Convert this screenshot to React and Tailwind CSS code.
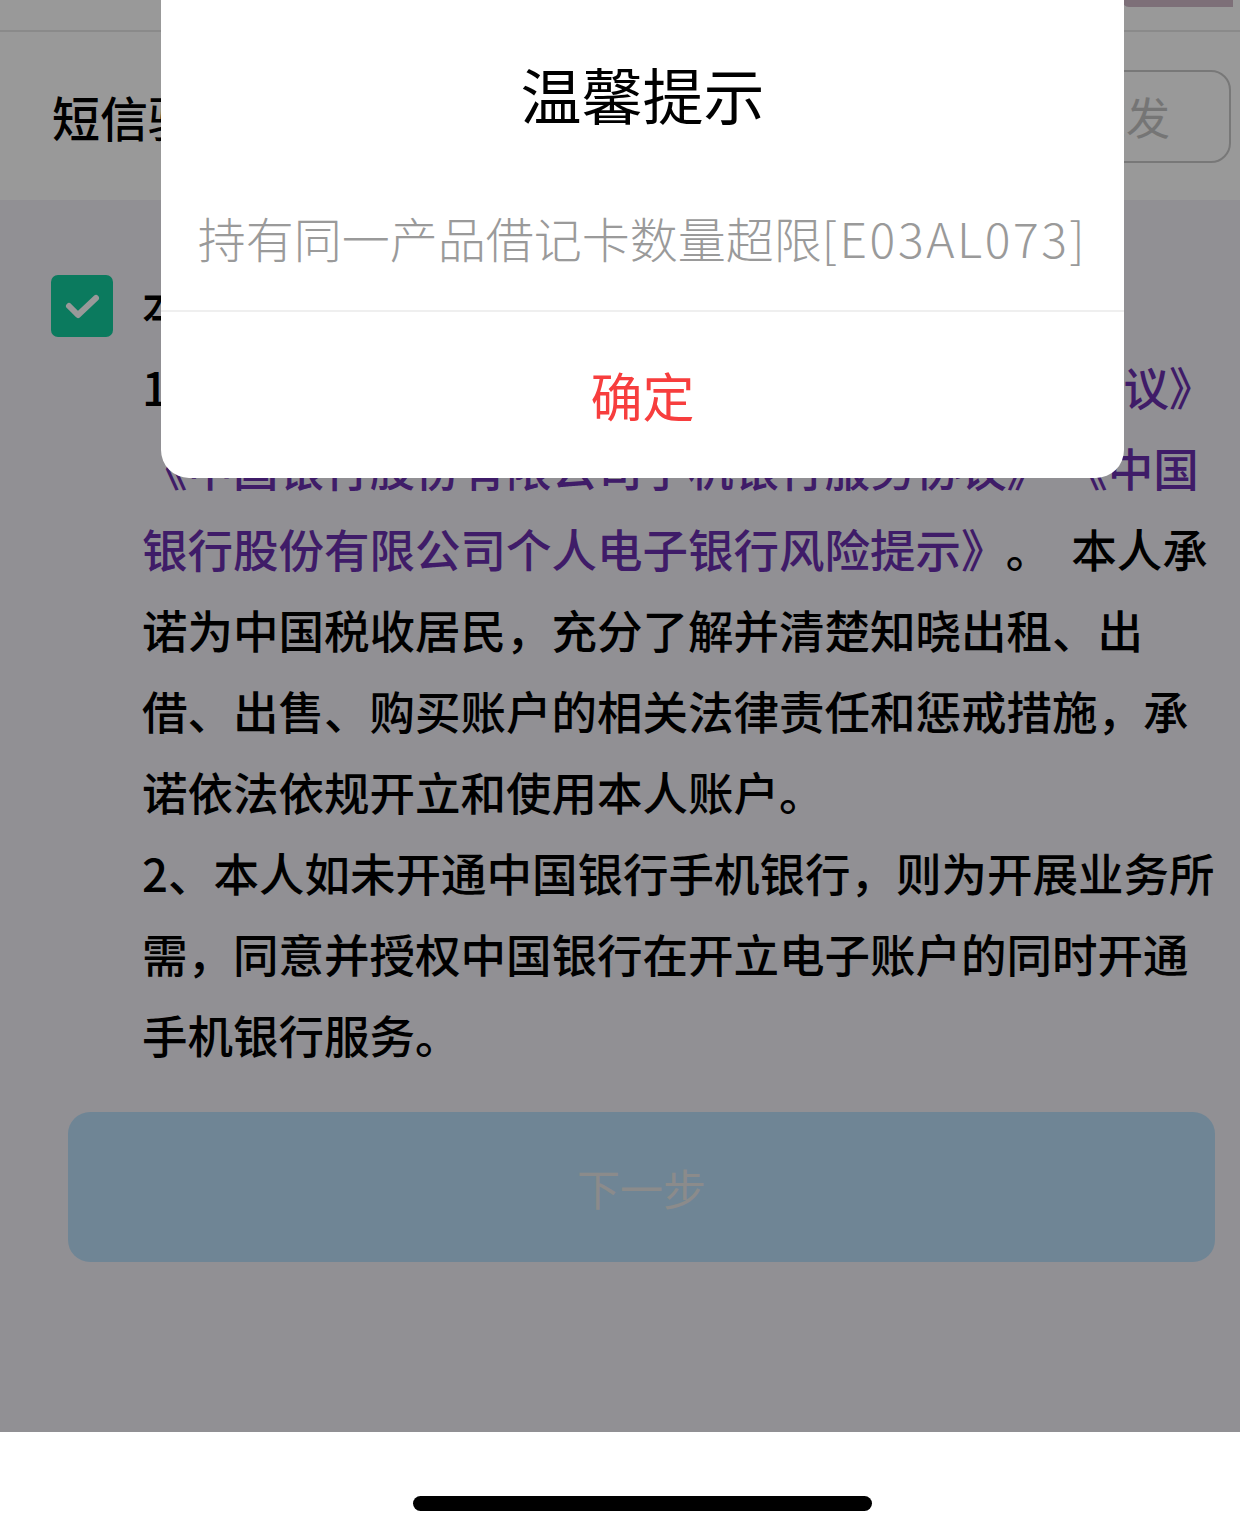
import React from 'react';

const font = { fontFamily: '"Noto Sans CJK SC", "Noto Sans", sans-serif' };

// agreement text, one entry per rendered line
const lines = [
  [{ t: '本人已阅读并同意以下内容：' }],
  [{ t: '1、本人已阅读并同意' }, { t: '《中国银行电子账户服务协议》', link: true }],
  [{ t: '《中国银行股份有限公司手机银行服务协议》 《中国', link: true }],
  [
    { t: '银行股份有限公司个人电子银行风险提示》', link: true },
    { t: '。', cls: 'ml-[22px]' },
    { t: '本人承', cls: 'ml-[20px]' },
  ],
  [{ t: '诺为中国税收居民，充分了解并清楚知晓出租、出' }],
  [{ t: '借、出售、购买账户的相关法律责任和惩戒措施，承' }],
  [{ t: '诺依法依规开立和使用本人账户。' }],
  [{ t: '2、本人如未开通中国银行手机银行，则为开展业务所' }],
  [{ t: '需，同意并授权中国银行在开立电子账户的同时开通' }],
  [{ t: '手机银行服务。' }],
];

const CheckBox = () => (
  <div className="w-[62px] h-[62px] rounded-[7px] bg-[#13cb9d] flex items-center justify-center shrink-0">
    <svg width="40" height="40" viewBox="0 0 40 40" fill="none">
      <polyline points="7,20 16,29 34,12" stroke="#ffffff" strokeWidth="6" strokeLinecap="round" strokeLinejoin="round" />
    </svg>
  </div>
);

const AlertDialog = () => (
  <div className="absolute left-[161px] top-0 w-[963px] bg-white rounded-b-[28px] flex flex-col" style={font}>
    <div className="pt-[58px] text-center text-[61px] leading-[72px] text-black">温馨提示</div>
    <div className="mt-[76px] pb-[42px] text-center text-[48px] leading-[62px] text-[#9a9a9a] font-light whitespace-nowrap">
      持有同一产品借记卡数量超限<span className="tracking-[2.6px]">[E03AL073]</span>
    </div>
    <div className="h-[2px] bg-[#efefef]"></div>
    <div className="h-[166px] flex items-center justify-center text-[52px] text-[#f73e3e]">确定</div>
  </div>
);

export default function App() {
  return (
    <div className="w-[1240px] h-[1535px] flex flex-col bg-white" style={font}>
      <div className="relative h-[1432px] bg-[#f2f0f7] flex flex-col">
        {/* top strip */}
        <div className="h-[32px] bg-white border-b-2 border-[#e6e6e6] flex justify-end">
          <div className="w-[111px] h-[7px] mr-[7px] bg-[#d0b9c8] rounded-bl-[8px]"></div>
        </div>

        {/* sms code row */}
        <div className="h-[168px] bg-white flex items-center justify-between pl-[52px] pr-[9px]">
          <span className="text-[48px] font-medium text-black">短信验证码</span>
          <div className="w-[210px] h-[93px] border-2 border-[#c8c8c8] rounded-[20px] flex items-center justify-center text-[44px] text-[#c4c4c4]">
            重发
          </div>
        </div>

        {/* agreement */}
        <div className="flex pl-[51px] pt-[65px] gap-[29px]">
          <div className="pt-[10px]">
            <CheckBox />
          </div>
          <div className="text-[45.5px] leading-[81px] font-medium text-black">
            {lines.map((line, i) => (
              <div key={i} className="whitespace-nowrap">
                {line.map((seg, j) => (
                  <span key={j} className={(seg.link ? 'text-[#6a2fae] ' : '') + (seg.cls || '')}>{seg.t}</span>
                ))}
              </div>
            ))}
          </div>
        </div>

        <div className="mt-[37px] ml-[68px] w-[1147px] h-[150px] rounded-[22px] bg-[#b9def8] flex items-center justify-center text-[43px] text-[#e8e8e8]">
          下一步
        </div>

        {/* dim mask + alert */}
        <div className="absolute inset-0 bg-black/40"></div>
        <AlertDialog />
      </div>

      <div className="flex-1 flex items-end pl-[413px] pb-[24px]">
        <div className="w-[459px] h-[15px] rounded-full bg-black"></div>
      </div>
    </div>
  );
}
